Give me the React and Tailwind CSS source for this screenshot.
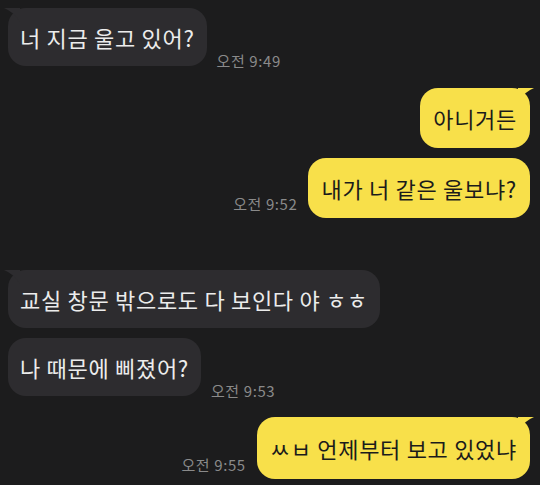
import React from "react";

const font = { fontFamily: '"Noto Sans CJK KR", "Noto Sans", sans-serif' };

function TailLeft() {
  return (
    <svg className="absolute left-[-4px] top-0" width="16" height="14" viewBox="0 0 16 14">
      <path d="M0 0 L16 0 L16 14 Q10 4 0 0 Z" fill="#2d2c2f" />
    </svg>
  );
}

function TailRight() {
  return (
    <svg className="absolute right-[-4px] top-0" width="16" height="14" viewBox="0 0 16 14">
      <path d="M16 0 L0 0 L0 14 Q6 4 16 0 Z" fill="#f8e04a" />
    </svg>
  );
}

function Left({ text, time, tail, mt }) {
  return (
    <div className={`flex items-end gap-[10px] pl-[8px] ${mt}`}>
      <div className="relative rounded-[18px] bg-[#2d2c2f] px-[12px] py-[15px] text-[22px] leading-[28px] tracking-[0.7px] text-[#ececec] whitespace-nowrap">
        {tail && <TailLeft />}
        <span className="relative">{text}</span>
      </div>
      {time && (
        <div className="mb-[-4px] text-[15px] leading-[18px] tracking-[0.6px] text-[#8a8a8a] whitespace-nowrap">{time}</div>
      )}
    </div>
  );
}

function Right({ text, time, tail, mt, h }) {
  return (
    <div className={`flex items-end justify-end gap-[11px] pr-[10px] ${mt}`}>
      {time && (
        <div className="mb-[5px] text-[15px] leading-[18px] tracking-[0.6px] text-[#8a8a8a] whitespace-nowrap">{time}</div>
      )}
      <div className={`relative rounded-[18px] bg-[#f8e04a] px-[13px] ${h} flex items-center text-[22px] leading-[28px] tracking-[0.7px] text-[#1b1b1b] whitespace-nowrap`}>
        {tail && <TailRight />}
        <span className="relative">{text}</span>
      </div>
    </div>
  );
}

export default function App() {
  return (
    <div className="h-[485px] w-[540px] overflow-hidden bg-[#1c1c1d] pt-[8px]" style={font}>
      <Left text="너 지금 울고 있어?" time="오전 9:49" tail mt="" />
      <Right text="아니거든" tail mt="mt-[22px]" h="h-[60px]" />
      <Right text="내가 너 같은 울보냐?" time="오전 9:52" mt="mt-[10px]" h="h-[60px]" />
      <Left text="교실 창문 밖으로도 다 보인다 야 ㅎㅎ" tail mt="mt-[52px]" />
      <Left text="나 때문에 삐졌어?" time="오전 9:53" mt="mt-[10px]" />
      <Right text="ㅆㅂ 언제부터 보고 있었냐" time="오전 9:55" tail mt="mt-[21px]" h="h-[62px]" />
    </div>
  );
}
